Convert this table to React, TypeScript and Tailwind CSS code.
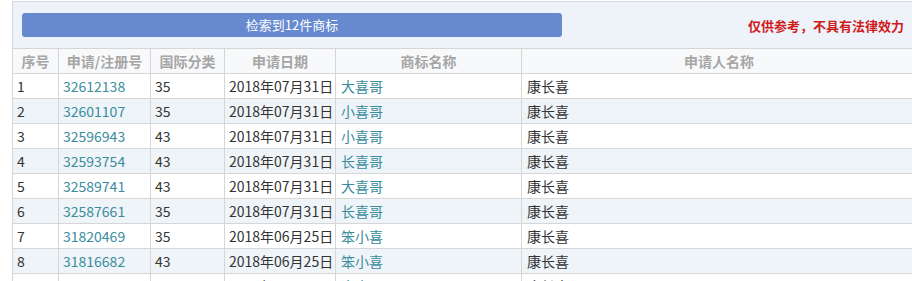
import React from 'react';

type Row = {
  id: number;
  regNo: string;
  cls: string;
  date: string;
  name: string;
  applicant: string;
};

const rows: Row[] = [
  { id: 1, regNo: "32612138", cls: "35", date: "2018年07月31日", name: "大喜哥", applicant: "康长喜" },
  { id: 2, regNo: "32601107", cls: "35", date: "2018年07月31日", name: "小喜哥", applicant: "康长喜" },
  { id: 3, regNo: "32596943", cls: "43", date: "2018年07月31日", name: "小喜哥", applicant: "康长喜" },
  { id: 4, regNo: "32593754", cls: "43", date: "2018年07月31日", name: "长喜哥", applicant: "康长喜" },
  { id: 5, regNo: "32589741", cls: "43", date: "2018年07月31日", name: "大喜哥", applicant: "康长喜" },
  { id: 6, regNo: "32587661", cls: "35", date: "2018年07月31日", name: "长喜哥", applicant: "康长喜" },
  { id: 7, regNo: "31820469", cls: "35", date: "2018年06月25日", name: "笨小喜", applicant: "康长喜" },
  { id: 8, regNo: "31816682", cls: "43", date: "2018年06月25日", name: "笨小喜", applicant: "康长喜" },
  { id: 9, regNo: "31816681", cls: "35", date: "2018年06月25日", name: "大喜哥", applicant: "康长喜" },
];

const font = { fontFamily: '"Noto Sans CJK SC", "Noto Sans", sans-serif' };

export default function App() {
  return (
    <div className="w-[912px] h-[281px] overflow-hidden bg-white pl-[12px] pt-[1px]" style={font}>
      <div className="w-[904px] border-l border-t border-[#d3d6da]">
        {/* top bar */}
        <div className="h-[46px] bg-[#eef3fa] flex items-center pl-[9px] pr-[12px]">
          <div className="w-[540px] h-[24px] rounded-[3px] bg-[#6689cf] text-white text-[13px] flex items-center justify-center">
            检索到12件商标
          </div>
          <div className="ml-auto text-[13px] font-bold text-[#d01a1a] leading-none">
            仅供参考，不具有法律效力
          </div>
        </div>

        {/* header */}
        <div className="flex h-[26px] border-y border-[#d6d6d6] bg-[#f8f9fa] text-[14px] font-semibold text-[#a6a6a6]">
          <div className="w-[46px] border-r border-[#d6d6d6] flex items-center justify-center">序号</div>
          <div className="w-[92px] border-r border-[#d6d6d6] flex items-center justify-center">申请/注册号</div>
          <div className="w-[74px] border-r border-[#d6d6d6] flex items-center justify-center">国际分类</div>
          <div className="w-[111px] border-r border-[#d6d6d6] flex items-center justify-center">申请日期</div>
          <div className="w-[186px] border-r border-[#d6d6d6] flex items-center justify-center">商标名称</div>
          <div className="flex-1 flex items-center justify-center">申请人名称</div>
        </div>

        {/* rows */}
        {rows.map((r, i) => (
          <div
            key={r.id}
            className={
              "flex h-[25px] border-b border-[#d6d6d6] text-[14px] text-[#333] " +
              (i % 2 === 1 ? "bg-[#eef4f8]" : "bg-white")
            }
          >
            <div className="w-[46px] border-r border-[#d6d6d6] flex items-center pl-[4px]">{r.id}</div>
            <div className="w-[92px] border-r border-[#d6d6d6] flex items-center pl-[4px] text-[#3a8c9e]">{r.regNo}</div>
            <div className="w-[74px] border-r border-[#d6d6d6] flex items-center pl-[4px]">{r.cls}</div>
            <div className="w-[111px] border-r border-[#d6d6d6] flex items-center pl-[4px] whitespace-nowrap">{r.date}</div>
            <div className="w-[186px] border-r border-[#d6d6d6] flex items-center pl-[5px] text-[#3a8c9e]">{r.name}</div>
            <div className="flex-1 flex items-center pl-[5px]">{r.applicant}</div>
          </div>
        ))}
      </div>
    </div>
  );
}
